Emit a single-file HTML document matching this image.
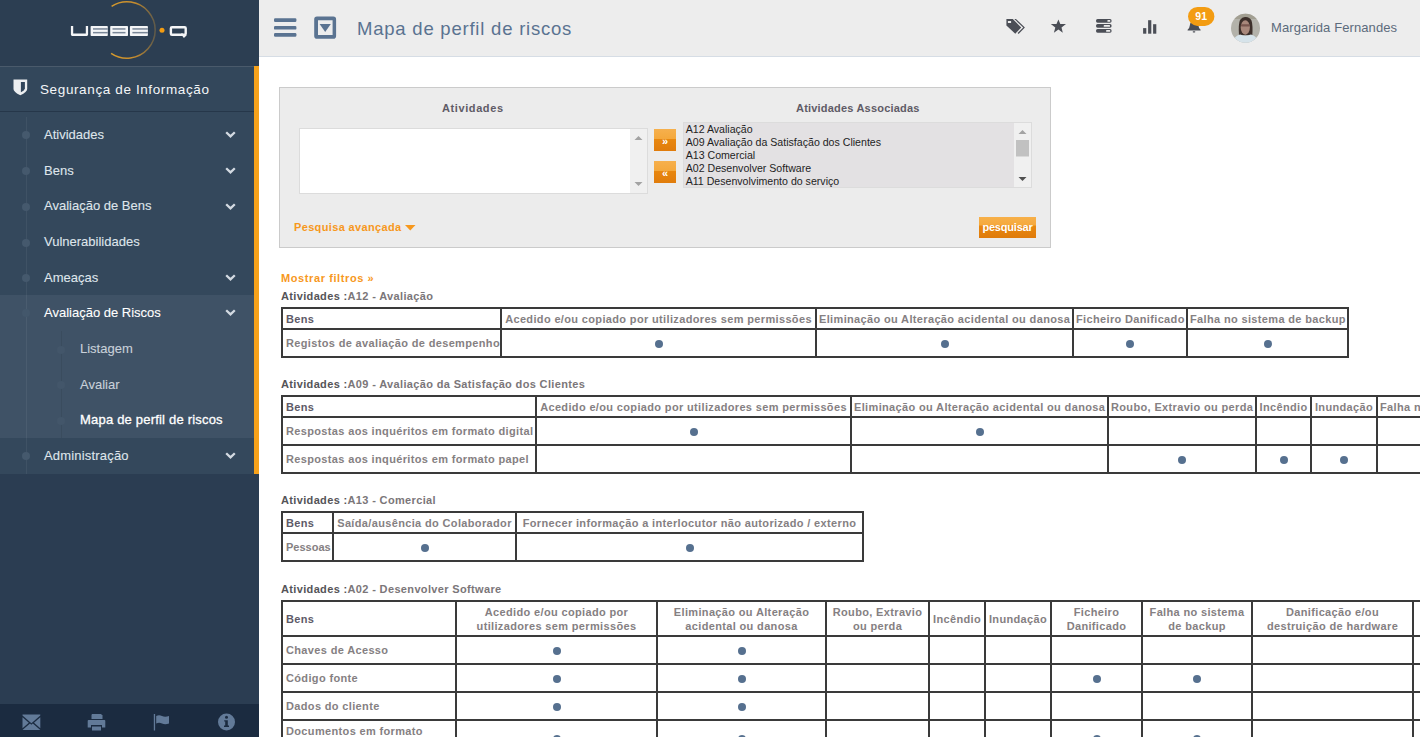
<!DOCTYPE html>
<html><head><meta charset="utf-8">
<style>
*{box-sizing:border-box}
html,body{margin:0;padding:0;width:1420px;height:737px;overflow:hidden;background:#fff;font-family:"Liberation Sans",sans-serif}
.abs{position:absolute}
#side{position:absolute;left:0;top:0;width:259px;height:737px;background:#2b3d52}
#logo{position:absolute;left:0;top:0;width:259px;height:66px;background:#2c3e52}
#sec{position:absolute;left:0;top:66px;width:254px;height:46px;background:#33475b;border-top:1px solid #4a5a6b;border-bottom:1px solid #26374a}
#sec .t{position:absolute;left:40px;top:15px;color:#f4f6f8;font-size:13.5px;letter-spacing:0.62px;white-space:nowrap}
#menu{position:absolute;left:0;top:112px;width:254px;height:362px;background:#34485c}
#grp{position:absolute;left:0;top:295px;width:254px;height:143px;background:#3f5266}
#obar{position:absolute;left:254px;top:66px;width:5px;height:408px;background:#f7a21b}
.mi{position:absolute;left:44px;color:#dfe5eb;font-size:13px;white-space:nowrap;-webkit-text-stroke:0.1px currentColor}
.chev{position:absolute;left:224.5px;width:11px;height:7px}
#tline{position:absolute;left:26px;top:117px;width:1px;height:357px;background:rgba(255,255,255,0.06)}
.dot{position:absolute;width:8px;height:8px;border-radius:50%;background:#45596d}
#bbar{position:absolute;left:0;top:704px;width:259px;height:33px;background:#1b2b40}
#hdr{position:absolute;left:259px;top:0;width:1161px;height:57px;background:#ededed;border-bottom:1px solid #d6dde5}

#filt{position:absolute;left:279px;top:87px;width:772px;height:161px;background:#ececec;border:1px solid #cbcbcb}
.lbl{position:absolute;font-size:11px;font-weight:700;letter-spacing:0.35px;color:#5f5b66;white-space:nowrap}
.lb{position:absolute;border:1px solid #dcdcdc}
.trk{position:absolute;top:0;right:0;width:17px;bottom:0;background:#f0f0f0}
.obtn{position:absolute;width:22px;height:22px;background:linear-gradient(#f6b04d 0,#f4a83c 45%,#e8870f 46%,#e07c0c 100%);color:#fff;font-size:11px;font-weight:700;text-align:center;line-height:24px}
.opt{position:absolute;left:2.2px;font-size:10.6px;color:#1e1e1e;white-space:nowrap}

.ttl{position:absolute;left:281px;font-size:11px;font-weight:700;letter-spacing:0.35px;color:#7b7679;white-space:nowrap}
.ttl b{color:#555458}
table.m{position:absolute;left:281px;border-collapse:collapse;table-layout:fixed;border-spacing:0}
table.m td{border:2px solid #3a3a3a;padding:0 2px;font-size:11px;font-weight:700;letter-spacing:0.35px;color:#858082;text-align:center;white-space:nowrap;line-height:14px}
table.m td:first-child{text-align:left;padding-left:3px}
table.m tr.h td:first-child{color:#5d5a67}
.d{display:inline-block;width:8px;height:8px;border-radius:50%;background:#56708f;vertical-align:middle}
#cont{position:absolute;left:0;top:0;width:1420px;height:737px;overflow:hidden}
</style></head><body>
<div id="side">
  <div id="logo">
    <svg class="abs" style="left:0;top:0" width="259" height="66" viewBox="0 0 259 66">
      <defs><linearGradient id="ag" x1="0" y1="0" x2="1" y2="0"><stop offset="0" stop-color="#d69a2c"/><stop offset="0.55" stop-color="#c48b2e"/><stop offset="1" stop-color="#5f5a4a"/></linearGradient></defs><path d="M111.6 6.4 A28.2 28.2 0 1 1 111.1 53.3" fill="none" stroke="url(#ag)" stroke-width="1.5"/>
      <g fill="#f4f5f7">
        <path d="M70.9 26 H73.2 V33.4 H85.8 V26 H88.1 V34.6 Q88.1 36 86.8 36 H72.2 Q70.9 36 70.9 34.6 Z"/>
        <rect x="90.6" y="26" width="17.2" height="10" rx="0.8"/>
        <rect x="110.2" y="26" width="17.8" height="10" rx="0.8"/>
        <rect x="129.9" y="26" width="18" height="10" rx="0.8"/>
      </g>
      <g fill="#788596">
        <rect x="93" y="28.2" width="14.8" height="1.5"/><rect x="93" y="31.9" width="14.8" height="1.5"/>
        <rect x="112.5" y="28.2" width="13" height="1.5"/><rect x="112.5" y="31.9" width="13" height="1.5"/>
        <rect x="132.4" y="28.2" width="15.5" height="1.5"/><rect x="132.4" y="31.9" width="15.5" height="1.5"/>
      </g>
      <path d="M172 27.2 H184.6 Q185.7 27.2 185.7 28.3 V33.7 Q185.7 34.8 184.6 34.8 H172 Q170.9 34.8 170.9 33.7 V28.3 Q170.9 27.2 172 27.2 Z" fill="none" stroke="#f4f5f7" stroke-width="2.4"/>
      <path d="M181.5 33.5 L184 36.8 L186 35" fill="none" stroke="#f4f5f7" stroke-width="1.6"/>
      <circle cx="162" cy="30.3" r="2.5" fill="#f39c12"/>
    </svg>
  </div>
  <div id="sec">
    <svg class="abs" style="left:13px;top:11px" width="16" height="19" viewBox="0 0 16 19">
      <path d="M0.5 1.6 H14.2 V11 Q14.2 14 7.3 17.3 Q0.5 14 0.5 11 Z" fill="#eceef0"/>
      <path d="M7.9 4.1 H11.9 V10.6 Q11.6 12.6 7.9 14.2 Z" fill="#30445a"/>
    </svg>
    <div class="t">Segurança de Informação</div>
  </div>
  <div id="menu"></div>
  <div id="grp"></div>
  <div id="tline"></div>
  <div id="tline2" class="abs" style="left:61px;top:331px;width:1px;height:107px;background:rgba(0,0,0,0.07)"></div>
  <div class="dot" style="left:22px;top:131.0px"></div>
  <div class="mi" style="top:126.9px;color:#dfe5eb">Atividades</div>
  <svg class="chev" style="top:131.0px" viewBox="0 0 11 7"><path d="M1.2 1.2 L5.5 5.4 L9.8 1.2" fill="none" stroke="#d3dae2" stroke-width="2.3"/></svg>
  <div class="dot" style="left:22px;top:167.3px"></div>
  <div class="mi" style="top:163.2px;color:#dfe5eb">Bens</div>
  <svg class="chev" style="top:167.3px" viewBox="0 0 11 7"><path d="M1.2 1.2 L5.5 5.4 L9.8 1.2" fill="none" stroke="#d3dae2" stroke-width="2.3"/></svg>
  <div class="dot" style="left:22px;top:202.5px"></div>
  <div class="mi" style="top:198.4px;color:#dfe5eb">Avaliação de Bens</div>
  <svg class="chev" style="top:202.5px" viewBox="0 0 11 7"><path d="M1.2 1.2 L5.5 5.4 L9.8 1.2" fill="none" stroke="#d3dae2" stroke-width="2.3"/></svg>
  <div class="dot" style="left:22px;top:238.5px"></div>
  <div class="mi" style="top:234.4px;color:#dfe5eb">Vulnerabilidades</div>
  <div class="dot" style="left:22px;top:274.3px"></div>
  <div class="mi" style="top:270.2px;color:#dfe5eb">Ameaças</div>
  <svg class="chev" style="top:274.3px" viewBox="0 0 11 7"><path d="M1.2 1.2 L5.5 5.4 L9.8 1.2" fill="none" stroke="#d3dae2" stroke-width="2.3"/></svg>
  <div class="dot" style="left:22px;top:309.3px;background:#43576b"></div>
  <div class="mi" style="top:305.2px;color:#ffffff">Avaliação de Riscos</div>
  <svg class="chev" style="top:309.3px" viewBox="0 0 11 7"><path d="M1.2 1.2 L5.5 5.4 L9.8 1.2" fill="none" stroke="#d3dae2" stroke-width="2.3"/></svg>
  <div class="dot" style="left:22px;top:452.0px"></div>
  <div class="mi" style="top:447.9px;color:#dfe5eb;letter-spacing:0.18px">Administração</div>
  <svg class="chev" style="top:452.0px" viewBox="0 0 11 7"><path d="M1.2 1.2 L5.5 5.4 L9.8 1.2" fill="none" stroke="#d3dae2" stroke-width="2.3"/></svg>
  <div class="dot" style="left:57px;top:345.5px;background:#43566a"></div>
  <div class="mi" style="left:80px;top:341.4px;color:#c9d1da">Listagem</div>
  <div class="dot" style="left:57px;top:381.2px;background:#43566a"></div>
  <div class="mi" style="left:80px;top:377.1px;color:#c9d1da">Avaliar</div>
  <div class="dot" style="left:57px;top:416.5px;background:#43566a"></div>
  <div class="mi" style="left:80px;top:412.4px;color:#ffffff;letter-spacing:0.2px;-webkit-text-stroke:0.3px #fff">Mapa de perfil de riscos</div>
  <div id="obar"></div>
  <div id="bbar">
    <svg class="abs" style="left:0;top:0" width="259" height="33" viewBox="0 0 259 33">
      <g fill="#627a98">
        <path d="M22.5 10.5 H40.3 V11.5 L31.4 19.3 L22.5 11.5 Z"/>
        <path d="M22.5 13.3 L28.8 18.8 L22.5 24.3 Z"/>
        <path d="M40.3 13.3 L34 18.8 L40.3 24.3 Z"/>
        <path d="M22.5 26 L30 19.6 L31.4 20.8 L32.8 19.6 L40.3 26 Z"/>
        <path d="M92 10 H101 L102.5 11.5 V15 H91.5 V11 Z"/>
        <path d="M88.5 16 H104.5 Q105.3 16 105.3 17 V23.5 H102 V21 H91 V23.5 H87.7 V17 Q87.7 16 88.5 16 Z"/>
        <rect x="92" y="22.5" width="9" height="4"/>
        <rect x="153.8" y="10" width="1.3" height="16.5"/>
        <path d="M156.2 12 Q159 10.5 162 12 Q165 13.5 169 12 V19.5 Q165 21 162 19.5 Q159 18 156.2 19.5 Z"/>
      </g>
      <circle cx="226.5" cy="18" r="8.5" fill="#627a98"/>
      <g fill="#1b2b40"><circle cx="226.5" cy="13.2" r="1.5"/><path d="M224.2 16.2 H227.8 V21.5 H229 V23 H224 V21.5 H225.2 V17.6 H224.2 Z"/></g>
    </svg>
  </div>
</div>
<div id="hdr">
  <svg class="abs" style="left:0;top:0" width="1161" height="56" viewBox="259 0 1161 56">
    <g fill="#5a7391">
      <rect x="274" y="18.2" width="22.4" height="3.7" rx="1.2"/>
      <rect x="274" y="25.9" width="22.4" height="3.7" rx="1.2"/>
      <rect x="274" y="33.1" width="22.4" height="3.7" rx="1.2"/>
      <path fill-rule="evenodd" d="M317 16.6 H333.3 Q336.1 16.6 336.1 19.4 V35.9 Q336.1 38.7 333.3 38.7 H317 Q314.2 38.7 314.2 35.9 V19.4 Q314.2 16.6 317 16.6 Z M318 20.2 V35 H332.6 V20.2 Z"/>
      <path d="M319.6 24 H330.8 L325.2 32.1 Z"/>
    </g>
    <g fill="#4b4e56">
      <path fill-rule="evenodd" d="M1006.4 19.1 H1012.8 L1021.2 27.5 L1015.3 33.7 L1006.4 25.6 Z M1007.9 21.1 V23.1 H1011.1 V21.1 Z"/>
      <path d="M1014.3 19.1 H1016 L1024.9 27.5 L1018.6 33.9 L1017.6 33 L1023.2 27.5 Z"/>
      <path d="M1058.4 19.4 L1060.3 23.9 L1066 24.1 L1061.5 27.4 L1062.8 32.7 L1058.4 29.6 L1053.9 32.7 L1055.3 27.4 L1050.8 24.1 L1056.5 23.9 Z"/>
      <rect x="1096" y="19.1" width="15.6" height="3.6" rx="1.6"/>
      <rect x="1096" y="24.1" width="15.6" height="3.6" rx="1.6"/>
      <rect x="1096" y="29.1" width="15.6" height="3.6" rx="1.6"/>
      <rect x="1143.1" y="28.1" width="3.2" height="5.6"/>
      <rect x="1148.1" y="20.2" width="3.2" height="13.5"/>
      <rect x="1153.1" y="24.2" width="3.2" height="9.5"/>
      <path d="M1194 21 Q1198 21 1198.4 25.5 Q1198.7 28.5 1200.6 29.8 V30.6 H1187.6 V29.8 Q1189.5 28.5 1189.8 25.5 Q1190.2 21 1194 21 Z"/>
      <rect x="1192.7" y="31.2" width="2.6" height="1.2" rx="0.6"/>
    </g>
    <g fill="#ededed">
      <rect x="1107.4" y="20.1" width="2.9" height="1.7" rx="0.6"/>
      <rect x="1103.7" y="25.1" width="6.3" height="1.7" rx="0.6"/>
      <rect x="1106.1" y="30.1" width="4.2" height="1.7" rx="0.6"/>
    </g>
    <rect x="1188" y="6.9" width="26.4" height="19" rx="9.5" fill="#f39c12"/>
    <text x="1201.2" y="20" text-anchor="middle" font-family="Liberation Sans" font-weight="700" font-size="10.5" fill="#fff">91</text>
    <defs>
      <clipPath id="av"><circle cx="1245.5" cy="28.3" r="14.5"/></clipPath>
      <radialGradient id="avbg" cx="0.5" cy="0.4" r="0.6"><stop offset="0" stop-color="#b9b4a8"/><stop offset="1" stop-color="#7c7a72"/></radialGradient>
    </defs>
    <g clip-path="url(#av)">
      <rect x="1230" y="13" width="31" height="31" fill="#b3b2aa"/>
      <rect x="1230" y="13" width="31" height="6" fill="#a29f92"/>
      <path d="M1239 35.5 Q1238.2 24 1240 20 Q1242.5 16.6 1245.5 17 Q1249.5 16.8 1251.5 20.5 Q1253 25 1252.3 35.5 Z" fill="#3d302b"/>
      <ellipse cx="1245.3" cy="27.5" rx="4.6" ry="7.2" fill="#a9887b"/>
      <rect x="1240.8" y="24.2" width="9" height="2.4" rx="1" fill="#6d4a44" opacity="0.8"/>
      <path d="M1233 44 Q1234 35.5 1240 34.5 Q1245.5 36.5 1251 34.5 Q1257 35.5 1258 44 Z" fill="#d6e3ea"/>
    </g>
  </svg>
  <div class="abs" style="left:98px;top:17.8px;font-size:18.5px;letter-spacing:0.78px;color:#5a7391;white-space:nowrap">Mapa de perfil de riscos</div>
  <div class="abs" style="left:1012px;top:20px;font-size:13px;color:#5c6b7c;white-space:nowrap;letter-spacing:0.1px">Margarida Fernandes</div>
</div>
<div id="cont">
<div class="ttl" style="top:272px;color:#f7981d;letter-spacing:0.6px">Mostrar filtros &raquo;</div>
<div class="ttl" style="top:290px"><b>Atividades :</b>A12 - Avaliação</div>
<table class="m" style="top:307px;width:1066px"><colgroup><col style="width:219px"><col style="width:315px"><col style="width:257px"><col style="width:114px"><col style="width:161px"></colgroup>
<tr class="h" style="height:21px"><td>Bens</td><td>Acedido e/ou copiado por utilizadores sem permissões</td><td>Eliminação ou Alteração acidental ou danosa</td><td>Ficheiro Danificado</td><td>Falha no sistema de backup</td></tr>
<tr style="height:28px"><td>Registos de avaliação de desempenho</td><td><span class="d"></span></td><td><span class="d"></span></td><td><span class="d"></span></td><td><span class="d"></span></td></tr>
</table>
<div class="ttl" style="top:378px"><b>Atividades :</b>A09 - Avaliação da Satisfação dos Clientes</div>
<table class="m" style="top:395px;width:1256px"><colgroup><col style="width:254px"><col style="width:315px"><col style="width:257px"><col style="width:148px"><col style="width:55px"><col style="width:66px"><col style="width:161px"></colgroup>
<tr class="h" style="height:21px"><td>Bens</td><td>Acedido e/ou copiado por utilizadores sem permissões</td><td>Eliminação ou Alteração acidental ou danosa</td><td>Roubo, Extravio ou perda</td><td>Incêndio</td><td>Inundação</td><td>Falha no sistema de backup</td></tr>
<tr style="height:28px"><td>Respostas aos inquéritos em formato digital</td><td><span class="d"></span></td><td><span class="d"></span></td><td></td><td></td><td></td><td></td></tr>
<tr style="height:28px"><td>Respostas aos inquéritos em formato papel</td><td></td><td></td><td><span class="d"></span></td><td><span class="d"></span></td><td><span class="d"></span></td><td></td></tr>
</table>
<div class="ttl" style="top:494px"><b>Atividades :</b>A13 - Comercial</div>
<table class="m" style="top:511px;width:581px"><colgroup><col style="width:51px"><col style="width:183px"><col style="width:347px"></colgroup>
<tr class="h" style="height:21px"><td>Bens</td><td>Saída/ausência do Colaborador</td><td>Fornecer informação a interlocutor não autorizado / externo</td></tr>
<tr style="height:28px"><td style="letter-spacing:0">Pessoas</td><td><span class="d"></span></td><td><span class="d"></span></td></tr>
</table>
<div class="ttl" style="top:583px"><b>Atividades :</b>A02 - Desenvolver Software</div>
<table class="m" style="top:600px;width:1281px"><colgroup><col style="width:174px"><col style="width:201px"><col style="width:169px"><col style="width:103px"><col style="width:56px"><col style="width:66px"><col style="width:91px"><col style="width:110px"><col style="width:161px"><col style="width:150px"></colgroup>
<tr class="h" style="height:35px"><td>Bens</td><td>Acedido e/ou copiado por<br>utilizadores sem permissões</td><td>Eliminação ou Alteração<br>acidental ou danosa</td><td>Roubo, Extravio<br>ou perda</td><td>Incêndio</td><td>Inundação</td><td>Ficheiro<br>Danificado</td><td>Falha no sistema<br>de backup</td><td>Danificação e/ou<br>destruição de hardware</td><td>Falha de<br>energia</td></tr>
<tr style="height:28px"><td>Chaves de Acesso</td><td><span class="d"></span></td><td><span class="d"></span></td><td></td><td></td><td></td><td></td><td></td><td></td><td></td></tr>
<tr style="height:28px"><td>Código fonte</td><td><span class="d"></span></td><td><span class="d"></span></td><td></td><td></td><td></td><td><span class="d"></span></td><td><span class="d"></span></td><td></td><td></td></tr>
<tr style="height:28px"><td>Dados do cliente</td><td><span class="d"></span></td><td><span class="d"></span></td><td></td><td></td><td></td><td></td><td></td><td></td><td></td></tr>
<tr style="height:36px"><td>Documentos em formato<br>digital</td><td><span class="d"></span></td><td><span class="d"></span></td><td></td><td></td><td></td><td><span class="d"></span></td><td><span class="d"></span></td><td></td><td></td></tr>
</table>
</div>
<div id="filt">
  <div class="lbl" style="left:162px;top:14px;letter-spacing:0.6px">Atividades</div>
  <div class="lb" style="left:18.5px;top:39.5px;width:349px;height:66px;background:#fff">
    <div class="trk"><svg class="abs" style="left:0;top:0" width="17" height="64" viewBox="0 0 17 64"><path d="M4.5 11 L8.5 7 L12.5 11 Z M4.5 53 L8.5 57 L12.5 53 Z" fill="#a3a3a3"/></svg></div>
  </div>
  <div class="obtn" style="left:374px;top:41px">&raquo;</div>
  <div class="obtn" style="left:374px;top:73px">&laquo;</div>
  <div class="lbl" style="left:516px;top:14px;letter-spacing:0.2px">Atividades Associadas</div>
  <div class="lb" style="left:402.5px;top:34px;width:349px;height:66px;background:#e3e1e3">
    <div class="opt" style="top:0px">A12 Avaliação</div>
    <div class="opt" style="top:12.9px">A09 Avaliação da Satisfação dos Clientes</div>
    <div class="opt" style="top:25.8px">A13 Comercial</div>
    <div class="opt" style="top:38.7px">A02 Desenvolver Software</div>
    <div class="opt" style="top:51.6px">A11 Desenvolvimento do serviço</div>
    <div class="trk"><svg class="abs" style="left:0;top:0" width="17" height="64" viewBox="0 0 17 64"><path d="M4.5 11 L8.5 7 L12.5 11 Z" fill="#a3a3a3"/><rect x="2" y="17" width="13" height="16.5" fill="#c1c1c1"/><path d="M4.5 54 L8.5 58 L12.5 54 Z" fill="#505050"/></svg></div>
  </div>
  <div class="lbl" style="left:14px;top:133px;color:#f7981d">Pesquisa avançada</div>
  <svg class="abs" style="left:125px;top:137px" width="11" height="6" viewBox="0 0 11 6"><path d="M0 0 H10.5 L5.25 5.5 Z" fill="#f7981d"/></svg>
  <div class="abs" style="left:699px;top:128.5px;width:57px;height:21px;background:linear-gradient(#f7b04a 0,#f5a93d 40%,#e9880f 41%,#df7b0b 100%);color:#fff;font-size:11px;font-weight:700;text-align:center;line-height:21px;letter-spacing:-0.2px">pesquisar</div>
</div>
</body></html>
